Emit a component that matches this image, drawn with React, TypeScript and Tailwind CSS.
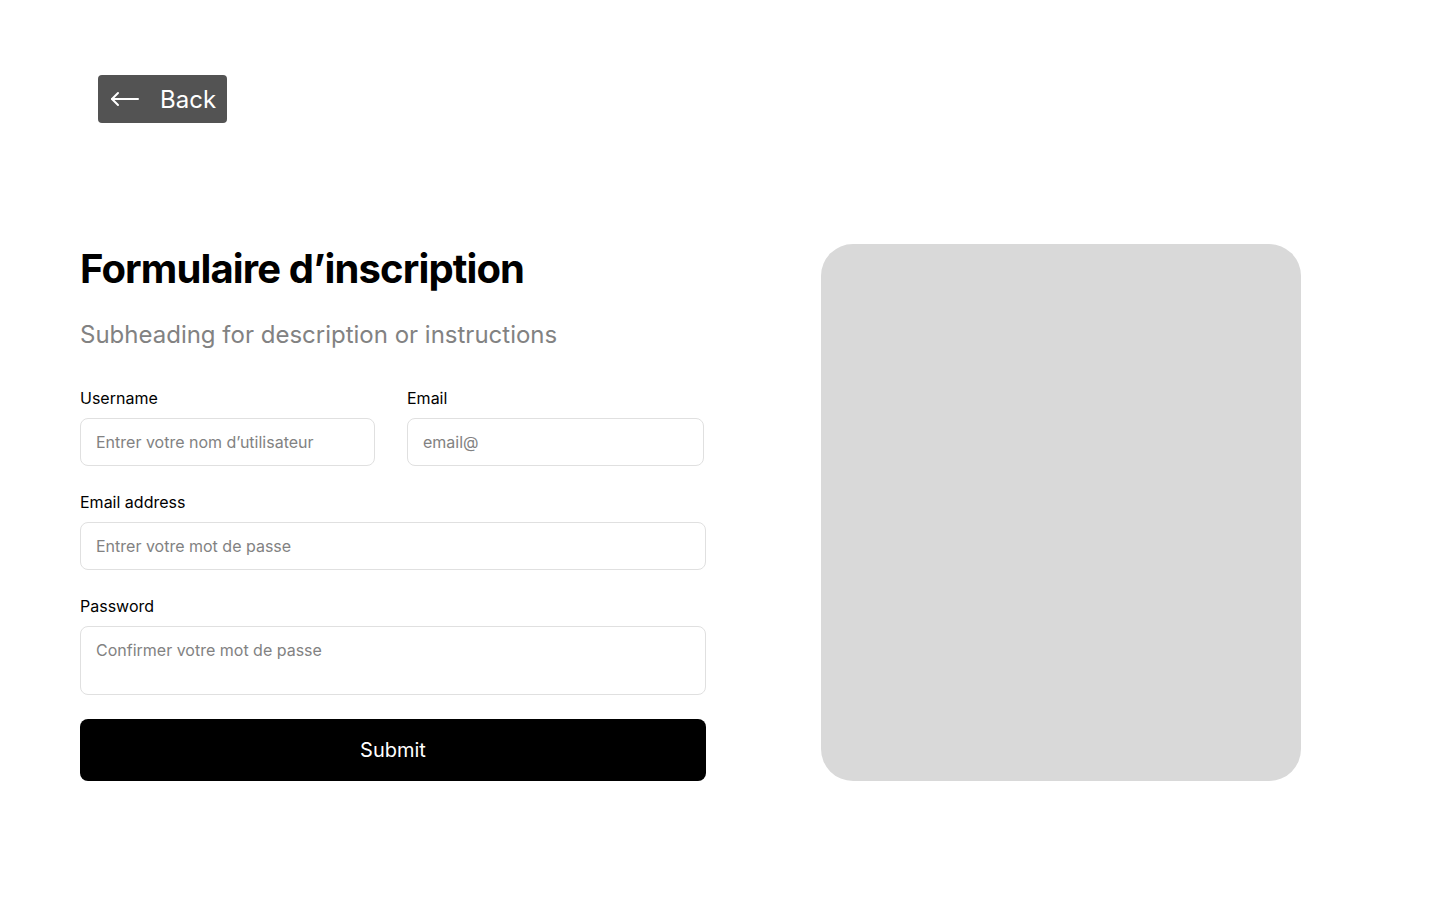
import React from "react";

export default function App() {
  const font = { fontFamily: "Inter, 'Noto Sans', sans-serif" };
  return (
    <div className="min-h-[921px] w-full bg-white text-black" style={font}>
      <div className="pl-[98px] pt-[75px]">
        <button className="flex h-[48px] w-[129px] items-center gap-[20px] rounded-[4px] bg-[#535353] pl-[12px] text-white">
          <svg width="30" height="16" viewBox="0 0 30 16" fill="none" stroke="white" strokeWidth="2" strokeLinecap="round" strokeLinejoin="round">
            <path d="M2 8H28" />
            <path d="M8 2L2 8L8 14" />
          </svg>
          <span className="pt-[2px] text-[24px] leading-none">Back</span>
        </button>
      </div>
      <div className="mt-[121px] flex pl-[80px]">
        <div className="flex w-[626px] flex-col">
          <h1 className="mt-[1px] text-[40px] font-bold leading-[48px] tracking-[-0.022em]">Formulaire d’inscription</h1>
          <p className="mt-[26px] text-[24px] leading-[32px] text-[#828282]">Subheading for description or instructions</p>
          <div className="mt-[35px] flex gap-[32px]">
            <div className="flex w-[295px] flex-col gap-[8px]">
              <label className="text-[16px] leading-[24px]">Username</label>
              <div className="flex h-[48px] items-center rounded-[8px] border border-[#e0e0e0] px-[15px] text-[16px] text-[#828282]">Entrer votre nom d’utilisateur</div>
            </div>
            <div className="flex w-[297px] flex-col gap-[8px]">
              <label className="text-[16px] leading-[24px]">Email</label>
              <div className="flex h-[48px] items-center rounded-[8px] border border-[#e0e0e0] px-[15px] text-[16px] text-[#828282]">email@</div>
            </div>
          </div>
          <div className="mt-[24px] flex flex-col gap-[8px]">
            <label className="text-[16px] leading-[24px]">Email address</label>
            <div className="flex h-[48px] items-center rounded-[8px] border border-[#e0e0e0] px-[15px] text-[16px] text-[#828282]">Entrer votre mot de passe</div>
          </div>
          <div className="mt-[24px] flex flex-col gap-[8px]">
            <label className="text-[16px] leading-[24px]">Password</label>
            <div className="h-[69px] rounded-[8px] border border-[#e0e0e0] px-[15px] pt-[11px] text-[16px] leading-[24px] text-[#828282]">Confirmer votre mot de passe</div>
          </div>
          <button className="mt-[24px] flex h-[62px] items-center justify-center rounded-[8px] bg-black text-[20px] text-white">Submit</button>
        </div>
        <div className="ml-[115px] h-[537px] w-[480px] rounded-[32px] bg-[#d9d9d9]" />
      </div>
    </div>
  );
}
